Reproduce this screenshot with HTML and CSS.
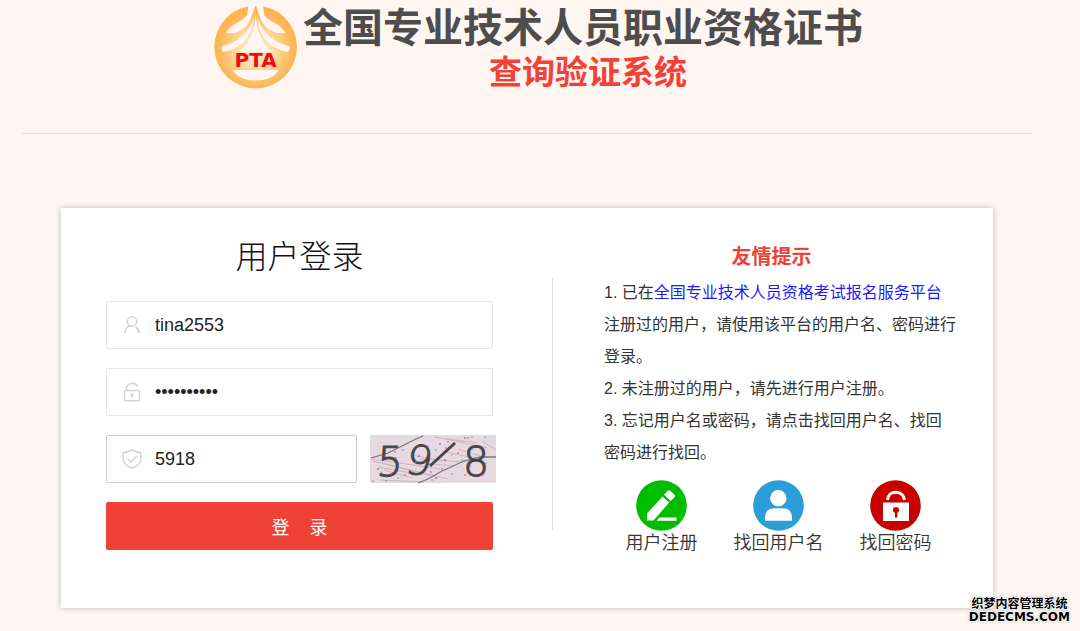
FILE: index.html
```html
<!DOCTYPE html>
<html lang="zh-CN">
<head>
<meta charset="utf-8">
<meta name="viewport" content="width=device-width, initial-scale=1">
<title>全国专业技术人员职业资格证书查询验证系统</title>
<link rel="stylesheet" href="styles.css">
</head>
<body>
<header class="header">
  <svg class="logo" viewBox="27 15 252 252" role="img" aria-label="PTA">
    <defs>
      <radialGradient id="gold" gradientUnits="userSpaceOnUse" cx="152" cy="150" r="125">
        <stop offset="0" stop-color="#fff0d8"/>
        <stop offset=".45" stop-color="#fedba2"/>
        <stop offset=".85" stop-color="#fdba5c"/>
        <stop offset="1" stop-color="#fcb350"/>
      </radialGradient>
    </defs>
    <circle cx="152" cy="141" r="124" fill="url(#gold)"/>
    <g fill="#fff6f2">
      <path d="M131 12L126 46C112 66 80 70 63 98C94 106 126 86 138 54L151 17L152 12Z"/>
      <path d="M173 12L178 46C192 66 224 70 241 98C210 106 178 86 166 54L153 17L152 12Z"/>
      <path d="M147 52C134 98 98 128 52 138Q46 148 56 156C100 148 128 122 142 84Z"/>
      <path d="M157 52C170 98 206 128 252 138Q258 148 248 156C204 148 176 122 162 84Z"/>
      <path d="M152 42C149 92 134 128 104 156H200C170 128 155 92 152 42Z"/>
      <path d="M84 210H221Q204 241 152 241T84 210Z"/>
    </g>
    <text class="logo-text" x="152" y="202" text-anchor="middle">PTA</text>
  </svg>
  <h1 class="brand">
    <span class="brand-main">全国专业技术人员职业资格证书</span>
    <span class="brand-sub">查询验证系统</span>
  </h1>
</header>

<main class="card">
  <form class="login">
    <h2 class="login-title">用户登录</h2>
    <div class="field">
      <label for="user" aria-label="用户名"><svg class="field-icon" viewBox="0 0 20 20"><circle cx="10" cy="6.5" r="4.7"/><path d="M2.8 18C3 13.5 5.5 11.2 8.5 11M13.5 12Q16.8 14 17.2 18"/></svg></label>
      <input id="user" type="text" value="tina2553">
    </div>
    <div class="field">
      <label for="pass" aria-label="密码"><svg class="field-icon" viewBox="0 0 20 20"><rect x="2.5" y="8.5" width="15" height="10.3" rx="1"/><path d="M4.5 8.5V7C4.5 .2 13.5-.1 15.4 4.5M10 13V16"/><circle cx="10" cy="12.6" r=".9"/></svg></label>
      <input id="pass" type="password" value="tina255359">
    </div>
    <div class="verify">
      <div class="field field-code">
        <label for="code" aria-label="验证码"><svg class="field-icon" viewBox="0 0 20 20"><path d="M10 .9Q13.5 3.4 18.8 3.5V10Q18.3 16.2 10 19.2Q1.7 16.2 1.2 10V3.5Q6.5 3.4 10 .9ZM5.5 9.5L9 13L15 7"/></svg></label>
        <input id="code" type="text" value="5918">
      </div>
      <svg class="captcha" viewBox="0 0 126 48" role="img" aria-label="验证码图片">
        <rect width="126" height="48" fill="#e7d9e0"/>
        <g fill="none" stroke="#d0b4c0">
          <path d="M2 24L70 34M3 26L66 42M12 28L78 44M8 32L52 40M10 45L54 47M50 24L94 27M48 28L84 31M42 20L72 26M64 2L108 8M76 4L118 13M88 14L114 22M112 6L126 15M72 16L108 24M14 35L42 43"/>
        </g>
        <path d="M1 23L18 18L46 4L53 1M126 22L110 22L94 26L72 36L58 44L48 48" fill="none" stroke="#777" stroke-width="1.3"/>
        <g class="captcha-digits">
          <text x="9" y="41" transform="skewX(-4)">5</text>
          <text x="38" y="40" transform="rotate(8 50 26) skewX(-4)">9</text>
          <text x="93" y="41">8</text>
        </g>
        <path d="M60 31L85 8" fill="none" stroke="#484448" stroke-width="3"/>
        <g fill="none" stroke-width="1.4" stroke-linecap="square">
          <path stroke="#74c043" d="M40 7h0M102 2h0M3 46h0M12 37h0M82 20h0M28 43h0M116 28h0M62 45h0"/>
          <path stroke="#ed5048" d="M78 7h0M98 3h0M48 12h0M88 18h0M95 40h0M21 39h0M72 34h0"/>
          <path stroke="#6e52df" d="M95 3h0M70 9h0M26 23h0M8 34h0M49 21h0M75 25h0M66 43h0M17 42h0"/>
          <path stroke="#38b5d6" d="M115 2h0M66 15h0M33 15h0M103 14h0M92 25h0M46 27h0M82 39h0M16 46h0"/>
          <path stroke="#dd42cc" d="M35 40h0M61 37h0M58 11h0M100 31h0M112 40h0M76 13h0M25 17h0"/>
        </g>
      </svg>
    </div>
    <button class="submit" type="submit"><span>登</span><span>录</span></button>
  </form>

  <div class="divider"></div>

  <section class="tips">
    <h2 class="tips-title">友情提示</h2>
    <p class="tips-text">1. 已在<a href="#">全国专业技术人员资格考试报名服务平台</a><br>注册过的用户，请使用该平台的用户名、密码进行<br>登录。</p>
    <p class="tips-text">2. 未注册过的用户，请先进行用户注册。</p>
    <p class="tips-text">3. 忘记用户名或密码，请点击找回用户名、找回<br>密码进行找回。</p>
    <nav class="actions">
      <a class="action" href="#">
        <svg class="action-icon" viewBox="0 0 51 51"><circle cx="25.5" cy="25.5" r="25.3" fill="#00bd00"/><g fill="#fff"><path d="M11 40.5V33.5L26.5 16.5L33.2 22.5L17.5 40.5ZM28 14.8L31.5 11Q33 9.5 34.5 11L38.5 14.8Q39.5 16 38.5 17.2L34.6 21ZM23.5 37.5H40.5V40.7H20.5Z"/></g></svg>
        用户注册
      </a>
      <a class="action" href="#">
        <svg class="action-icon" viewBox="0 0 51 51"><circle cx="25.5" cy="25.5" r="25.3" fill="#2b9dd8"/><g fill="#fff"><circle cx="25.3" cy="18.3" r="8.2"/><path d="M12 40.7V38Q12 28.2 21 28.2H30Q39 28.2 39 38V40.7Z"/></g></svg>
        找回用户名
      </a>
      <a class="action" href="#">
        <svg class="action-icon" viewBox="0 0 51 51"><circle cx="25.5" cy="25.5" r="25.3" fill="#c80000"/><path d="M17.5 20C18 9.5 33.5 9.5 34.5 20" fill="none" stroke="#fff" stroke-width="3"/><path d="M13 22.5H39V41H13Z" fill="#fff"/><g fill="#c80000"><circle cx="26" cy="30" r="3"/><path d="M25 31H27.3V37.5H25Z"/></g></svg>
        找回密码
      </a>
    </nav>
  </section>
</main>

<div class="watermark"><span class="watermark-name">织梦内容管理系统</span><span class="watermark-site">DEDECMS.COM</span></div>
</body>
</html>
```

FILE: styles.css
```css
* {
  box-sizing: border-box;
}

body {
  margin: 0;
  padding: 0 47px 23px 22px;
  background: #fff6f2;
  color: #333;
  font-family: "Liberation Sans", "Noto Sans CJK SC", sans-serif;
}

h1,
h2,
p {
  margin: 0;
}

.header {
  display: flex;
  justify-content: center;
  gap: 5px;
  padding: 5px 0 38px 22px;
  border-bottom: 1px solid #e3dddb;
}

.logo {
  width: 84px;
  height: 84px;
}

.logo-text {
  font: bold 60px "DejaVu Sans", sans-serif;
  fill: #f00a14;
}

.brand {
  display: flex;
  flex-direction: column;
  align-items: center;
  font-weight: 700;
}

.brand-main {
  font-size: 40px;
  line-height: 46px;
  color: #4d4d4d;
}

.brand-sub {
  padding-left: 10px;
  font-size: 33px;
  line-height: 44px;
  color: #f24238;
}

.card {
  display: flex;
  margin: 74px 40px 0 39px;
  padding: 27px 26px 53px 45px;
  background: #fff;
  box-shadow: 0 0 6px rgba(0, 0, 0, 0.25);
}

.login {
  display: flex;
  flex: 387 1 0;
  flex-direction: column;
  gap: 19px;
  min-width: 0;
}

.login-title {
  margin-bottom: 3px;
  font-size: 32px;
  font-weight: 300;
  line-height: 44px;
  text-align: center;
  color: #111;
}

.field {
  display: flex;
  align-items: center;
  height: 48px;
  padding-left: 15px;
  border: 1px solid #e6e6e6;
  border-radius: 2px;
}

.field-code {
  flex: 1;
  min-width: 0;
  border-color: #ccc;
}

.field label {
  display: flex;
}

.field-icon {
  width: 20px;
  height: 20px;
  fill: none;
  stroke: #d3d3d3;
  stroke-width: 1.5;
}

.field input {
  flex: 1;
  min-width: 0;
  padding: 0 13px;
  border: 0;
  outline: 0;
  background: none;
  color: #222;
  font-family: inherit;
  font-size: 18px;
}

.verify {
  display: flex;
  gap: 13px;
  margin-right: -3px;
}

.captcha {
  flex: none;
  width: 126px;
  height: 48px;
  overflow: visible;
}

.captcha-digits {
  font: 200 41px "DejaVu Sans", "DejaVu Sans Light", sans-serif;
  fill: #484448;
  stroke: #484448;
}

.submit {
  display: flex;
  align-items: center;
  justify-content: center;
  gap: 20px;
  height: 48px;
  border: 0;
  border-radius: 2px;
  background: #ef4136;
  color: #fff;
  font-family: inherit;
  font-size: 18px;
}

.divider {
  width: 1px;
  margin: 43px 51px 25px 59px;
  background: #ddd;
}

.tips {
  display: flex;
  flex: 363 1 0;
  flex-direction: column;
  min-width: 0;
}

.tips-title {
  margin: 6px 0 4px;
  padding-right: 28px;
  font-size: 20px;
  line-height: 32px;
  text-align: center;
  color: #f04136;
}

.tips-text {
  font-size: 16px;
  line-height: 32px;
  white-space: nowrap;
}

.tips-text a {
  color: #1b1bff;
  text-decoration: none;
}

.actions {
  display: flex;
  justify-content: center;
  gap: 36px;
  margin-top: 11px;
  padding-right: 14px;
}

.action {
  display: flex;
  flex-direction: column;
  align-items: center;
  color: #333;
  font-size: 18px;
  font-weight: 350;
  line-height: 24px;
  text-decoration: none;
}

.action-icon {
  width: 51px;
  height: 51px;
}

.watermark {
  position: absolute;
  right: 10px;
  bottom: 7px;
  display: flex;
  flex-direction: column;
  align-items: center;
  color: #000;
  font-weight: 700;
  line-height: 13px;
  text-shadow: 1px 0 #fff, -1px 0 #fff, 0 1px #fff, 0 -1px #fff, 0 0 3px #777;
}

.watermark-name {
  font-size: 12px;
}

.watermark-site {
  font-family: "DejaVu Sans", sans-serif;
  font-size: 12px;
}
```
